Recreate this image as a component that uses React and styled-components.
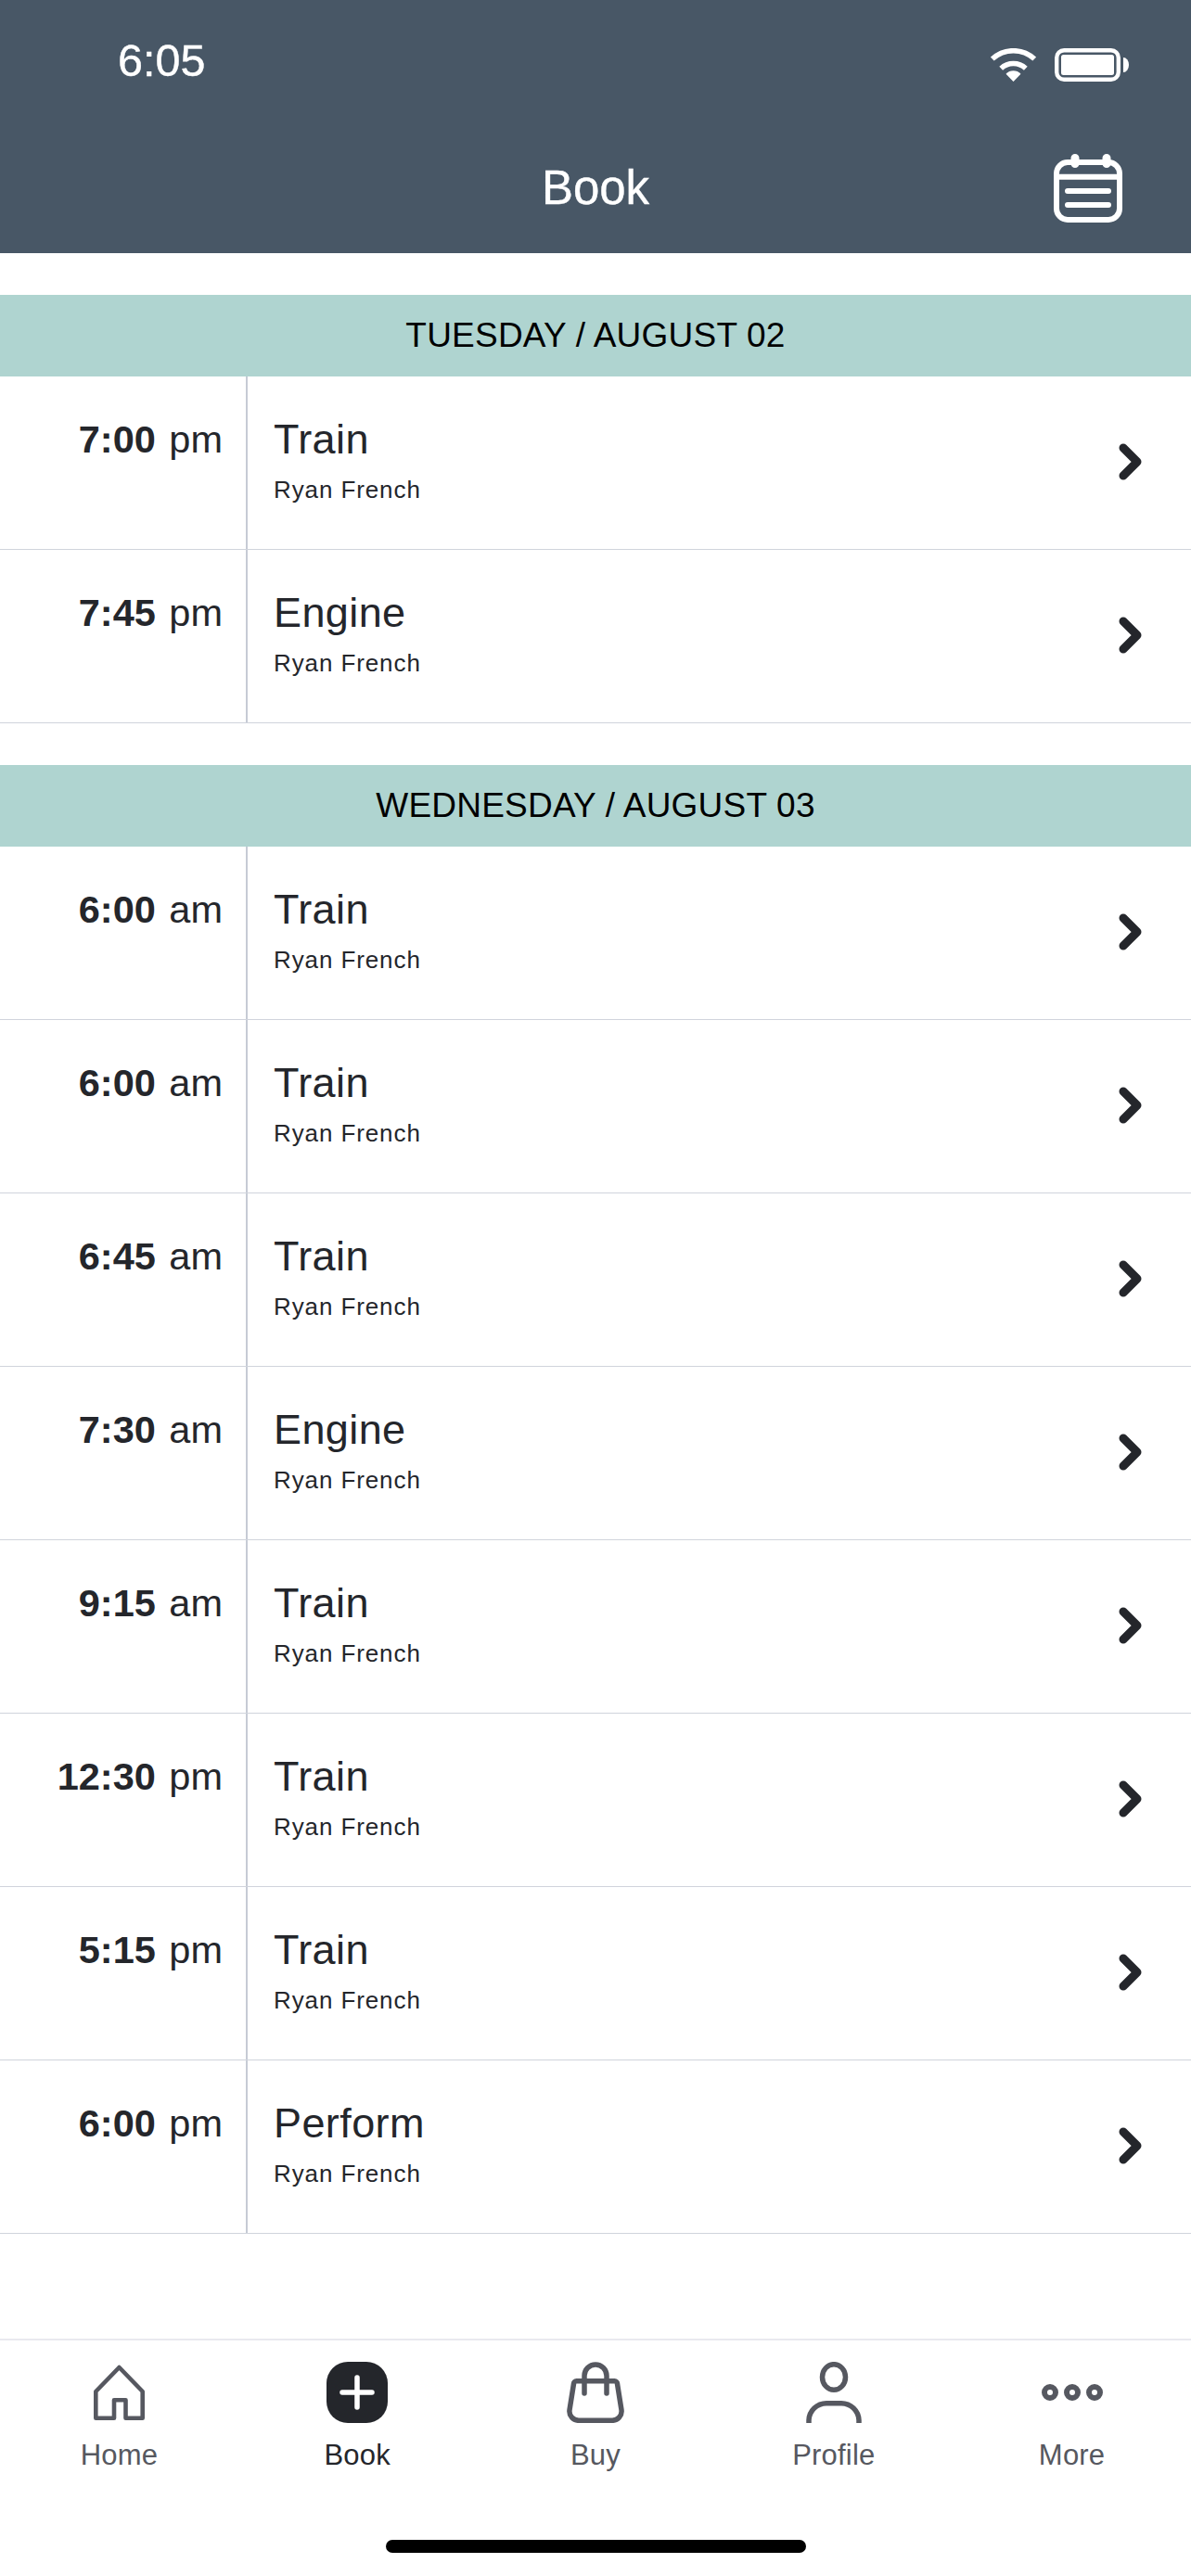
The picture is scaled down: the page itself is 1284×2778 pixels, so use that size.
import React from 'react';
import styled, { createGlobalStyle } from 'styled-components';

const GlobalStyle = createGlobalStyle`
  html, body {
    margin: 0;
    padding: 0;
    background: #fff;
  }
  * {
    box-sizing: border-box;
  }
`;

const Page = styled.div`
  display: flex;
  flex-direction: column;
  width: 1284px;
  height: 2778px;
  overflow: hidden;
  font-family: 'Liberation Sans', Arial, sans-serif;
  color: #24262b;
  background: #fff;
`;

const Header = styled.header`
  display: flex;
  flex-direction: column;
  height: 273px;
  flex-shrink: 0;
  background: #485766;
  color: #fff;
`;

const StatusBar = styled.div`
  display: flex;
  justify-content: space-between;
  align-items: flex-start;
  height: 135px;
  padding: 52px 67px 0 127px;
`;

const Clock = styled.span`
  margin-top: -15px;
  font-size: 48.5px;
  line-height: 56px;
  -webkit-text-stroke: 0.4px #fff;
`;

const StatusIcons = styled.div`
  display: flex;
  gap: 20px;
`;

const TitleBar = styled.div`
  display: grid;
  grid-template-columns: 1fr auto 1fr;
  align-items: center;
  height: 138px;
`;

const Title = styled.h1`
  grid-column: 2;
  margin: 0 0 2px;
  font-size: 51px;
  line-height: 58px;
  font-weight: 400;
  -webkit-text-stroke: 0.4px #fff;
`;

const CalendarButton = styled.button`
  display: flex;
  justify-self: end;
  margin: 0 74px 2px 0;
  padding: 0;
  border: 0;
  background: none;
`;

const Main = styled.main`
  flex: 1;
  padding-top: 45px;
`;

const Day = styled.section`
  margin-bottom: 45px;
`;

const DayTitle = styled.h2`
  display: flex;
  justify-content: center;
  align-items: center;
  height: 88px;
  margin: 0;
  background: #afd4d0;
  color: #000;
  font-size: 37px;
  font-weight: 400;
  letter-spacing: 0.22px;
`;

const Row = styled.div`
  display: grid;
  grid-template-columns: 267px 1fr auto;
  height: 187px;
  border-bottom: 1px solid #d0d4dc;
`;

const Time = styled.div`
  padding: 44px 25px 0 0;
  border-right: 2px solid #c6cbd5;
  font-size: 41.5px;
  line-height: 48px;
  text-align: right;
  white-space: nowrap;
  b {
    margin-right: 14.5px;
  }
`;

const Info = styled.div`
  padding: 42px 0 0 28px;
`;

const ClassName = styled.div`
  font-size: 45px;
  line-height: 52px;
  letter-spacing: 0.4px;
`;

const Coach = styled.div`
  margin-top: 13px;
  font-size: 26px;
  line-height: 30px;
  letter-spacing: 0.9px;
`;

const Chevron = styled.svg`
  align-self: center;
  margin: 0 53px 3px 0;
`;

const TabBar = styled.footer`
  flex-shrink: 0;
  height: 256px;
  padding-top: 23px;
  border-top: 2px solid #e9e9ef;
`;

const Tabs = styled.nav`
  display: grid;
  grid-template-columns: repeat(5, 1fr);
`;

const Tab = styled.div`
  display: flex;
  flex-direction: column;
  align-items: center;
  color: ${p => (p.$active ? '#24262b' : '#565860')};
`;

const TabIcon = styled.div`
  display: flex;
  align-items: center;
  height: 66px;
`;

const TabLabel = styled.span`
  margin-top: 17px;
  font-size: 31px;
  line-height: 36px;
  letter-spacing: 0.2px;
`;

const HomeBar = styled.div`
  width: 453px;
  height: 14px;
  margin: 73px auto 0;
  border-radius: 7px;
  background: #000;
`;

const WifiIcon = () => (
  <svg width="49" height="36" viewBox="0 0 49 36" fill="none">
    <path d="M1.8 11.6A33.3 33.3 0 0 1 47.2 11.6" stroke="#fff" strokeWidth="5.5" />
    <path d="M11.2 21.7A19.5 19.5 0 0 1 37.8 21.7" stroke="#fff" strokeWidth="5.5" />
    <path d="M24.5 36L16.5 27.8A11 11 0 0 1 32.5 27.8Z" fill="#fff" />
  </svg>
);

const BatteryIcon = () => (
  <svg width="80" height="36" viewBox="0 0 80 36" fill="none">
    <rect x="2.2" y="2.2" width="66.6" height="31.6" rx="8" stroke="#fff" strokeWidth="4.4" />
    <rect x="7" y="7" width="57" height="22" rx="2.5" fill="#fff" />
    <path d="M74 10A6 8 0 0 1 74 26Z" fill="#fff" />
  </svg>
);

const CalendarIcon = () => (
  <svg width="74" height="74" viewBox="0 0 74 74" fill="none" stroke="#fff" strokeLinecap="round">
    <rect x="3" y="9" width="68" height="62" rx="12" strokeWidth="6" />
    <path d="M23 4.5V10.5M57 4.5V10.5" strokeWidth="9" />
    <path d="M3 24.7H71" strokeWidth="6" strokeLinecap="butt" />
    <path d="M15 40H59M15 55H59" strokeWidth="6" />
  </svg>
);

const ChevronIcon = () => (
  <Chevron width="25" height="40" viewBox="0 0 25 40" fill="none">
    <path d="M5 5L20 20L5 35" stroke="#24262b" strokeWidth="9" strokeLinecap="round" strokeLinejoin="round" />
  </Chevron>
);

const HomeIcon = () => (
  <svg width="55" height="60" viewBox="0 0 55 60" fill="none" stroke="currentColor" strokeWidth="4.6" strokeLinejoin="round">
    <path d="M27.5 3L2.3 29V57.7H22V38.2H34.5V57.7H52.7V29Z" />
  </svg>
);

const BookIcon = () => (
  <svg width="66" height="66" viewBox="0 0 66 66" fill="none">
    <rect width="66" height="66" rx="23" fill="#24262b" />
    <path d="M33 17V49M17 33H49" stroke="#fff" strokeWidth="5.5" strokeLinecap="round" />
  </svg>
);

const BagIcon = () => (
  <svg width="62" height="66" viewBox="0 0 62 66" fill="none" stroke="currentColor" strokeWidth="5.5" strokeLinecap="round" strokeLinejoin="round">
    <path d="M10.5 20.8H51.5A3 3 0 0 1 54.5 23.8L59 52A10 10 0 0 1 49 63.3H13A10 10 0 0 1 3 52L7.5 23.8A3 3 0 0 1 10.5 20.8Z" />
    <path d="M19 34V15A12 12 0 0 1 43 15V34" />
  </svg>
);

const ProfileIcon = () => (
  <svg width="60" height="66" viewBox="0 0 60 66" fill="none" stroke="currentColor" strokeWidth="5.5">
    <ellipse cx="30" cy="16.5" rx="12.5" ry="13.8" />
    <path d="M3 66V63A19 19 0 0 1 22 44.7H38A19 19 0 0 1 57 63V66" />
  </svg>
);

const MoreIcon = () => (
  <svg width="66" height="66" viewBox="0 0 66 66" fill="none" stroke="currentColor" strokeWidth="6">
    <circle cx="9" cy="33" r="6" />
    <circle cx="33" cy="33" r="6" />
    <circle cx="57" cy="33" r="6" />
  </svg>
);

const schedule = [
  {
    title: 'TUESDAY / AUGUST 02',
    classes: [
      ['7:00', 'pm', 'Train'],
      ['7:45', 'pm', 'Engine'],
    ],
  },
  {
    title: 'WEDNESDAY / AUGUST 03',
    classes: [
      ['6:00', 'am', 'Train'],
      ['6:00', 'am', 'Train'],
      ['6:45', 'am', 'Train'],
      ['7:30', 'am', 'Engine'],
      ['9:15', 'am', 'Train'],
      ['12:30', 'pm', 'Train'],
      ['5:15', 'pm', 'Train'],
      ['6:00', 'pm', 'Perform'],
    ],
  },
];

const tabs = [
  { label: 'Home', Icon: HomeIcon },
  { label: 'Book', Icon: BookIcon, active: true },
  { label: 'Buy', Icon: BagIcon },
  { label: 'Profile', Icon: ProfileIcon },
  { label: 'More', Icon: MoreIcon },
];

const App = () => (
  <Page>
    <GlobalStyle />
    <Header>
      <StatusBar>
        <Clock>6:05</Clock>
        <StatusIcons>
          <WifiIcon />
          <BatteryIcon />
        </StatusIcons>
      </StatusBar>
      <TitleBar>
        <Title>Book</Title>
        <CalendarButton aria-label="Calendar">
          <CalendarIcon />
        </CalendarButton>
      </TitleBar>
    </Header>
    <Main>
      {schedule.map(day => (
        <Day key={day.title}>
          <DayTitle>{day.title}</DayTitle>
          {day.classes.map(([time, period, name], i) => (
            <Row key={i}>
              <Time>
                <b>{time}</b>
                {period}
              </Time>
              <Info>
                <ClassName>{name}</ClassName>
                <Coach>Ryan French</Coach>
              </Info>
              <ChevronIcon />
            </Row>
          ))}
        </Day>
      ))}
    </Main>
    <TabBar>
      <Tabs>
        {tabs.map(({ label, Icon, active }) => (
          <Tab key={label} $active={active}>
            <TabIcon>
              <Icon />
            </TabIcon>
            <TabLabel>{label}</TabLabel>
          </Tab>
        ))}
      </Tabs>
      <HomeBar />
    </TabBar>
  </Page>
);

export default App;
